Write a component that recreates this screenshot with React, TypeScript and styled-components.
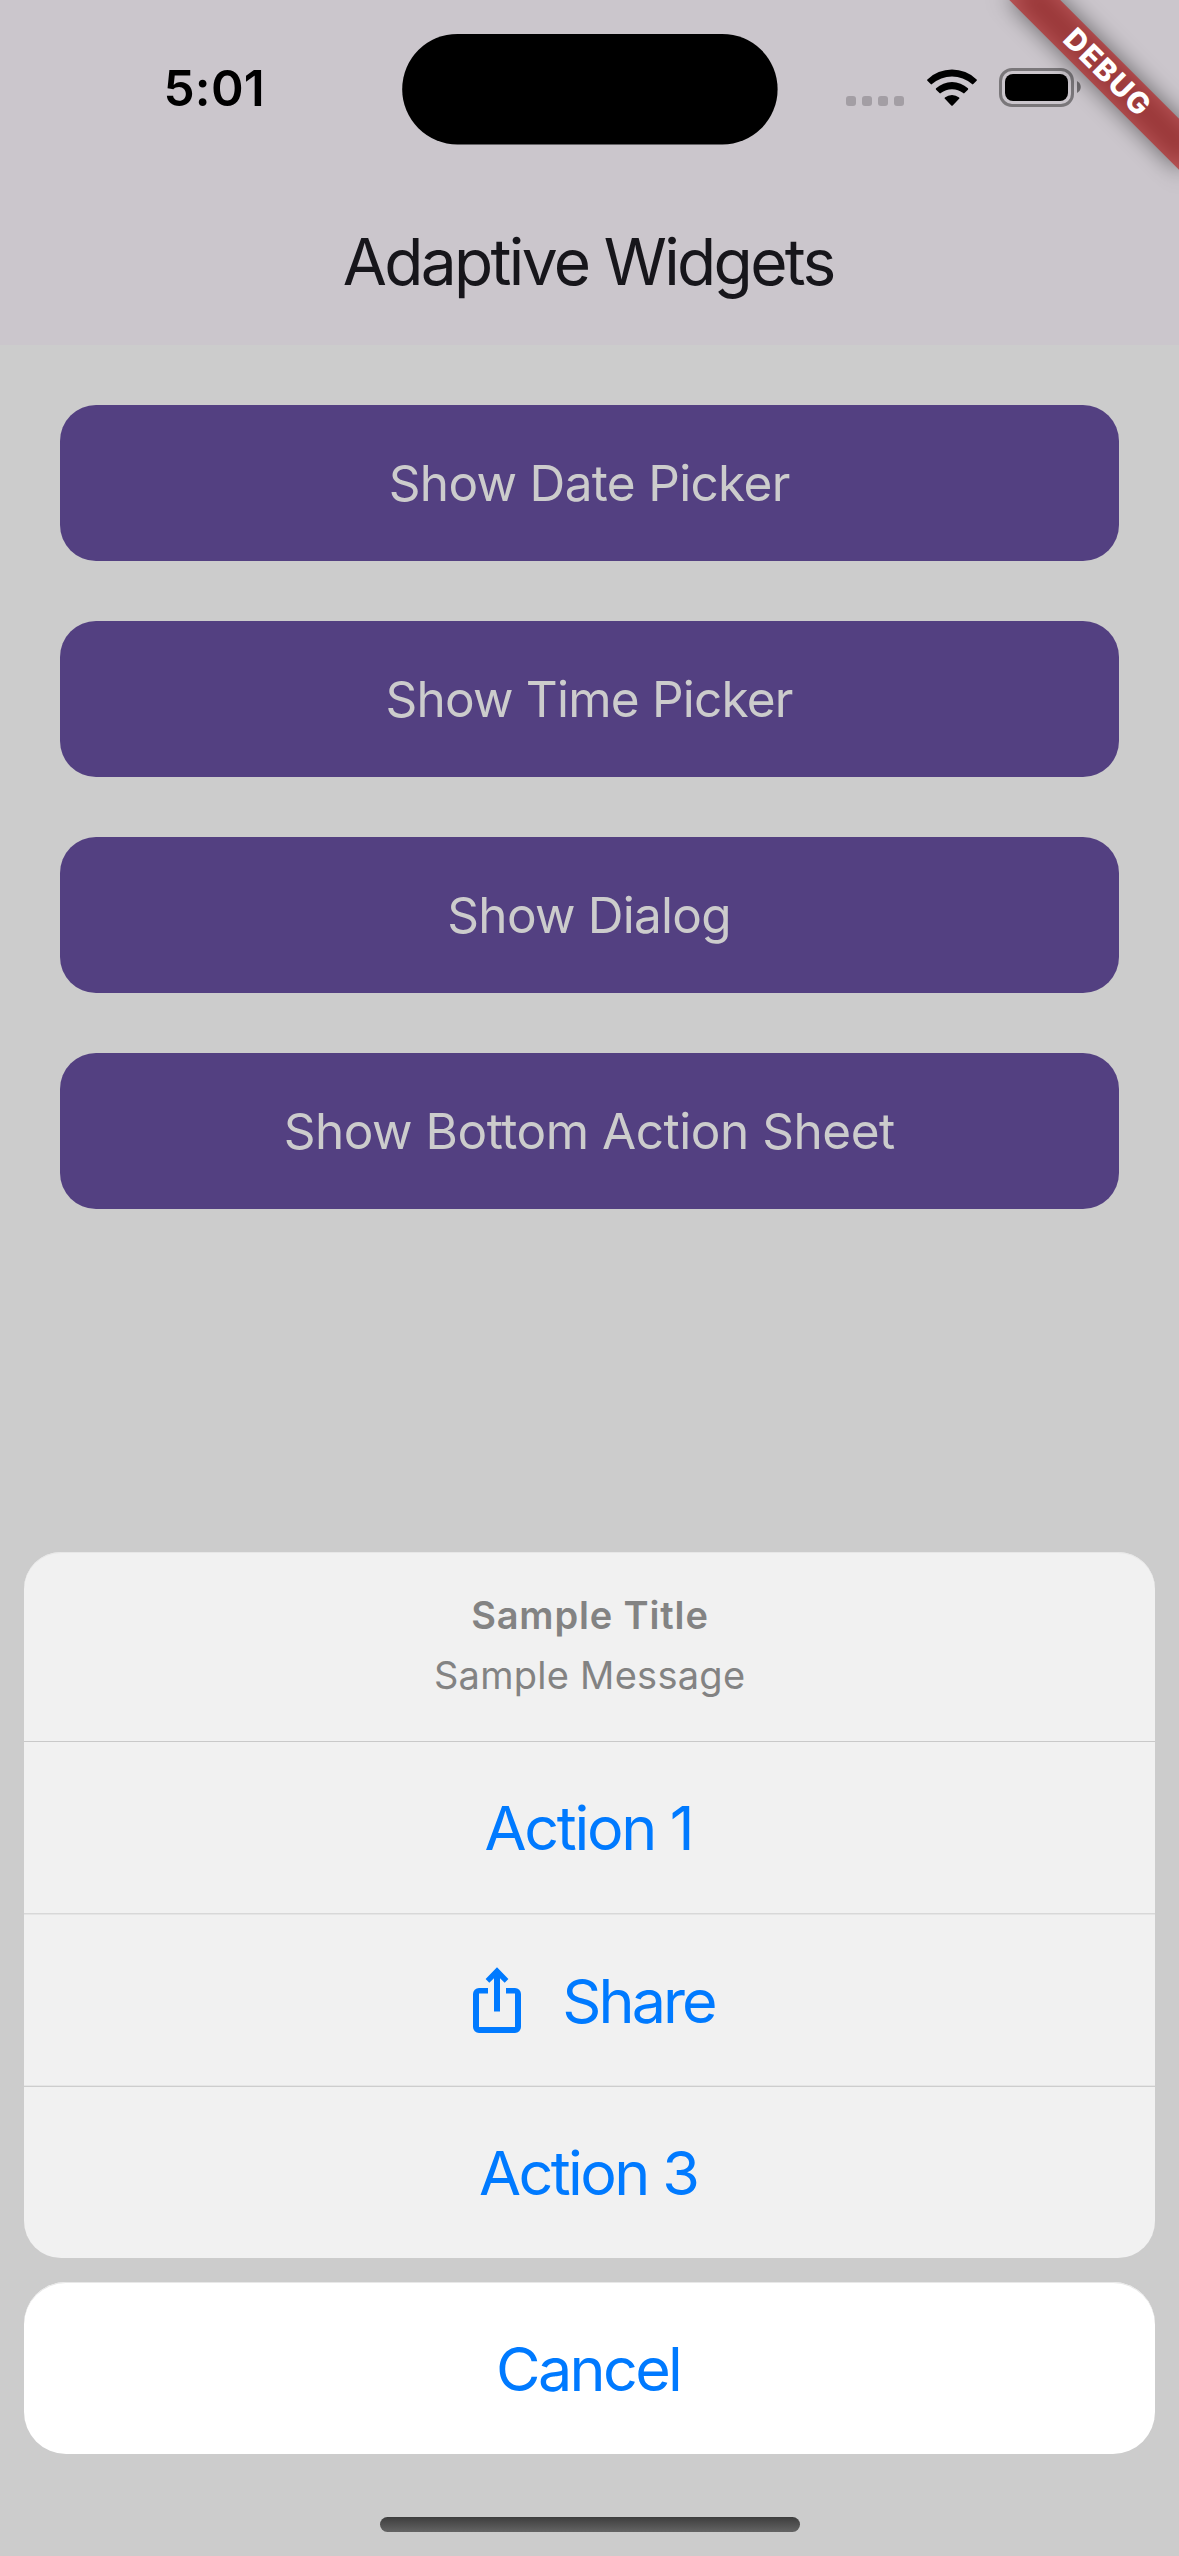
import React from "react";
import styled, { createGlobalStyle } from "styled-components";

const GlobalStyle = createGlobalStyle`
  *, *::before, *::after { box-sizing: border-box; }
  body { margin: 0; background: #cccccc; }
`;

const Screen = styled.div`
  position: relative;
  display: flex;
  flex-direction: column;
  width: 1179px;
  height: 2556px;
  overflow: hidden;
  background: #cccccc;
  font-family: Inter, "Liberation Sans", sans-serif;
`;

/* Text with tracking; the negative margin removes the trailing gap so it centres cleanly. */
const Label = styled.span<{ $track?: number }>`
  letter-spacing: ${(p) => p.$track ?? 0}px;
  margin-right: ${(p) => -(p.$track ?? 0)}px;
  white-space: nowrap;
`;

const Header = styled.header`
  display: flex;
  flex-direction: column;
  height: 345px;
  background: #cbc6cc;
`;

const StatusBar = styled.div`
  position: relative;
  z-index: 2;
  display: grid;
  grid-template-columns: 401.7px 375.6px 1fr;
  align-items: center;
  height: 177px;
`;

const Clock = styled.div`
  padding: 0 0 2px 163.5px;
  font-size: 49.5px;
  font-weight: 600;
  line-height: 60px;
  color: #000;
`;

const Island = styled.svg`
  display: block;
  width: 376px;
  height: 112px;
`;

const StatusIcons = styled.div`
  display: flex;
  align-items: center;
  padding-left: 68.7px;
`;

const CellularDots = styled.div`
  display: flex;
  gap: 6px;
  margin-top: 25px;
`;

const Dot = styled.i`
  width: 10px;
  height: 10px;
  border-radius: 3px;
  background: #a39ea4;
`;

const WifiIcon = styled.svg`
  display: block;
  width: 50px;
  height: 38px;
  margin: -1px 22.3px 0 22.7px;
`;

const BatteryIcon = styled.svg`
  display: block;
  width: 82px;
  height: 39px;
  margin-top: -2px;
`;

const AppBar = styled.h1`
  display: flex;
  flex: 1;
  align-items: center;
  justify-content: center;
  margin: 0;
  font-size: 64px;
  font-weight: 380;
  color: #17161b;
`;

const ButtonList = styled.main`
  display: flex;
  flex-direction: column;
  gap: 60px;
  padding: 60px;
`;

const PurpleButton = styled.button`
  display: flex;
  align-items: center;
  justify-content: center;
  height: 156px;
  padding: 0;
  border: 0;
  border-radius: 36px;
  background: #534081;
  color: #cccccc;
  font-family: inherit;
  font-size: 49.5px;
`;

const DebugBanner = styled.div`
  position: absolute;
  z-index: 1;
  top: 84px;
  right: -120px;
  width: 240px;
  height: 36px;
  transform-origin: 120px -84px;
  transform: rotate(45deg);
`;

const BannerShadow = styled.div`
  position: absolute;
  inset: 0;
  background: rgba(0, 0, 0, 0.5);
  filter: blur(11.5px);
`;

const BannerFace = styled.div`
  position: relative;
  display: flex;
  align-items: center;
  justify-content: center;
  height: 36px;
  padding-bottom: 3px;
  background: rgba(183, 28, 28, 0.627);
  color: #fff;
  font-size: 29.5px;
  font-weight: 800;
  line-height: 30px;
`;

const SheetOverlay = styled.section`
  position: absolute;
  inset: 0;
  display: flex;
  flex-direction: column;
  justify-content: flex-end;
  gap: 24px;
  padding: 0 24px 102px;
`;

const SheetGroup = styled.div`
  overflow: hidden;
  border-radius: 37px;
  background: #f1f1f1;
  box-shadow: inset 0 1px #e7e7e7;
`;

const SheetHeading = styled.div`
  display: flex;
  flex-direction: column;
  align-items: center;
  height: 189px;
  padding-top: 33px;
  color: #838383;
  font-size: 38px;
  line-height: 60px;
`;

const SheetTitle = styled(Label)`
  font-weight: 600;
`;

const Divider = styled.div<{ $upper: string; $lower?: string }>`
  height: ${(p) => (p.$lower ? 2 : 1)}px;
  border-top: 1px solid ${(p) => p.$upper};
  border-bottom: ${(p) => (p.$lower ? `1px solid ${p.$lower}` : "0")};
`;

const SheetAction = styled.button<{ $height: number; $shift?: number }>`
  display: flex;
  align-items: center;
  justify-content: center;
  width: 100%;
  height: ${(p) => p.$height}px;
  padding: ${(p) => p.$shift ?? 0}px 0 0;
  border: 0;
  background: transparent;
  color: #007aff;
  font-family: inherit;
  font-size: 61px;
  font-weight: 380;
  line-height: 74px;
`;

const CancelButton = styled(SheetAction)`
  flex: none;
  border-radius: 42px;
  background: #fff;
  box-shadow: inset 0 1px #e8e8e8;
`;

const ShareIcon = styled.svg`
  flex: none;
  width: 48px;
  height: 66px;
  margin: 0 41px 2px 12px;
`;

const HomeIndicator = styled.div`
  position: absolute;
  left: 380px;
  bottom: 24px;
  width: 420px;
  height: 15px;
  border-radius: 8px;
  background: linear-gradient(#3d3d3d, #646464);
`;

const buttons: { text: string; track: number }[] = [
  { text: "Show Date Picker", track: -0.67 },
  { text: "Show Time Picker", track: -0.8 },
  { text: "Show Dialog", track: -0.75 },
  { text: "Show Bottom Action Sheet", track: -0.47 },
];

export default function App() {
  return (
    <Screen>
      <GlobalStyle />
      <Header>
        <StatusBar>
          <Clock>
            <Label $track={0.24}>5:01</Label>
          </Clock>
          <Island viewBox="0 0 376 112">
            <rect x="0.2" y="0.9" width="375.4" height="110.6" rx="55.3" />
          </Island>
          <StatusIcons>
            <CellularDots>
              <Dot />
              <Dot />
              <Dot />
              <Dot />
            </CellularDots>
            <WifiIcon viewBox="0 0 50 38">
              <path d="M0.4 10.4A35.6 35.6 0 0 1 49.6 10.4Q50.3 11.1 49.6 11.8L46.3 15.1Q45.7 15.7 45 15.1A30.3 30.3 0 0 0 5 15.1Q4.3 15.7 3.7 15.1L0.4 11.8Q-0.3 11.1 0.4 10.4Z" />
              <path d="M9.1 19.3A23.4 23.4 0 0 1 40.9 19.3Q41.6 20 40.9 20.7L37.5 24.1Q36.9 24.7 36.2 24.1A17.8 17.8 0 0 0 13.8 24.1Q13.1 24.7 12.5 24.1L9.1 20.7Q8.4 20 9.1 19.3Z" />
              <path d="M17.9 28.4A11.3 11.3 0 0 1 32.1 28.4Q32.9 29.1 32.1 29.8L25.7 36.4Q25 37.1 24.3 36.4L17.9 29.8Q17.1 29.1 17.9 28.4Z" />
            </WifiIcon>
            <BatteryIcon viewBox="0 0 82 39">
              <rect x="1.5" y="1.5" width="72" height="36" rx="11.5" fill="none" stroke="#000" strokeOpacity="0.4" strokeWidth="3" />
              <rect x="6" y="6" width="63" height="27" rx="8" />
              <path d="M78 13C83 15.5 83 22.5 78 25Z" fillOpacity="0.45" />
            </BatteryIcon>
          </StatusIcons>
        </StatusBar>
        <AppBar>
          <Label $track={-2.65}>Adaptive Widgets</Label>
        </AppBar>
      </Header>

      <ButtonList>
        {buttons.map((b) => (
          <PurpleButton key={b.text}>
            <Label $track={b.track}>{b.text}</Label>
          </PurpleButton>
        ))}
      </ButtonList>

      <DebugBanner>
        <BannerShadow />
        <BannerFace>
          <Label $track={1.5}>DEBUG</Label>
        </BannerFace>
      </DebugBanner>

      <SheetOverlay>
        <SheetGroup>
          <SheetHeading>
            <SheetTitle $track={0.85}>Sample Title</SheetTitle>
            <Label $track={0.27}>Sample Message</Label>
          </SheetHeading>
          <Divider $upper="#c9c9c9" />
          <SheetAction $height={171}>
            <Label $track={-2.3}>Action 1</Label>
          </SheetAction>
          <Divider $upper="#d8d8d8" $lower="#e5e5e5" />
          <SheetAction $height={170} $shift={2}>
            <ShareIcon viewBox="0 0 48 66">
              <path
                fill="#007aff"
                fillRule="evenodd"
                d="M15 21H6A6 6 0 0 0 0 27V60A6 6 0 0 0 6 66H42A6 6 0 0 0 48 60V27A6 6 0 0 0 42 21H33V26.5H42V60H6V26.5H15Z"
              />
              <path fill="#007aff" d="M24 0.3L12.6 11.9L16.3 15.7L21 11.2V44.5H27V11.2L31.7 15.7L35.4 11.9Z" />
            </ShareIcon>
            <Label $track={-2.9}>Share</Label>
          </SheetAction>
          <Divider $upper="#e5e5e5" $lower="#cdcdcd" />
          <SheetAction $height={171}>
            <Label $track={-2.6}>Action 3</Label>
          </SheetAction>
        </SheetGroup>
        <CancelButton $height={172} $shift={1}>
          <Label $track={-2.65}>Cancel</Label>
        </CancelButton>
      </SheetOverlay>

      <HomeIndicator />
    </Screen>
  );
}
